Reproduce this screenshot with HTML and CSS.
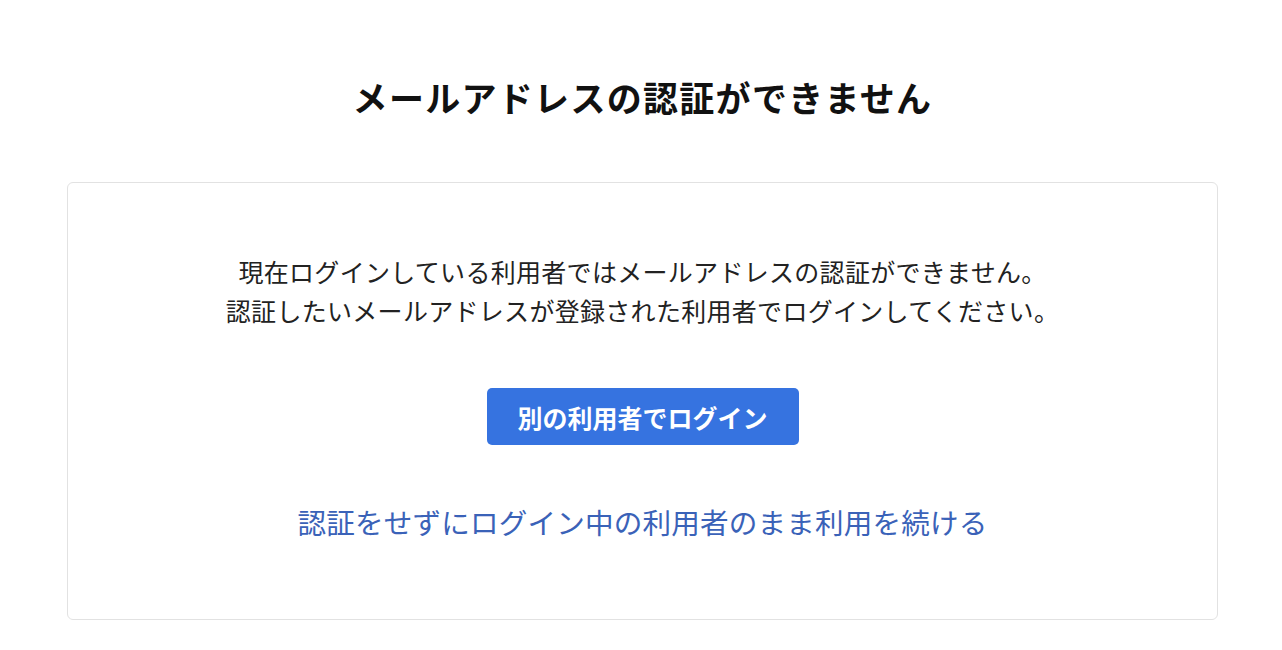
FILE: index.html
```html
<!DOCTYPE html>
<html lang="ja">
<head>
  <meta charset="UTF-8">
  <title>メールアドレスの認証ができません</title>
  <link rel="stylesheet" href="styles.css">
</head>
<body>

<div class="page">
  <h1 class="title">メールアドレスの認証ができません</h1>

  <div class="card">
    <p class="message">
      現在ログインしている利用者ではメールアドレスの認証ができません。<br>
      認証したいメールアドレスが登録された利用者でログインしてください。
    </p>
    <button class="btn-login" type="button">別の利用者でログイン</button>
    <a class="continue-link" href="#">認証をせずにログイン中の利用者のまま利用を続ける</a>
  </div>
</div>

</body>
</html>
```

FILE: styles.css
```css
body {
  margin: 0;
  background: #fff;
  font-family: "Noto Sans CJK JP", "Noto Sans", sans-serif;
  color: #222;
}

.page {
  width: 1151px;
  margin: 0 0 0 67px;
  display: flex;
  flex-direction: column;
  align-items: center;
}

.title {
  margin: 73px 0 61px;
  font-size: 35px;
  line-height: 48px;
  font-weight: bold;
  color: #111;
  letter-spacing: 1.3px;
}

.card {
  box-sizing: border-box;
  width: 100%;
  border: 1px solid #e2e2e2;
  border-radius: 6px;
  padding: 69px 20px 77px;
  display: flex;
  flex-direction: column;
  align-items: center;
}

.message {
  margin: 0;
  font-size: 25px;
  line-height: 39px;
  text-align: center;
  color: #222;
  letter-spacing: 0.3px;
}

.btn-login {
  margin-top: 58px;
  width: 312px;
  height: 57px;
  padding: 0;
  background: #3673e0;
  color: #fff;
  border: none;
  border-radius: 5px;
  font-family: inherit;
  font-size: 25px;
  font-weight: bold;
  cursor: pointer;
}

.continue-link {
  margin-top: 57px;
  font-size: 28.6px;
  line-height: 40px;
  color: #3a62b8;
  text-decoration: none;
  letter-spacing: 0.15px;
}
```
